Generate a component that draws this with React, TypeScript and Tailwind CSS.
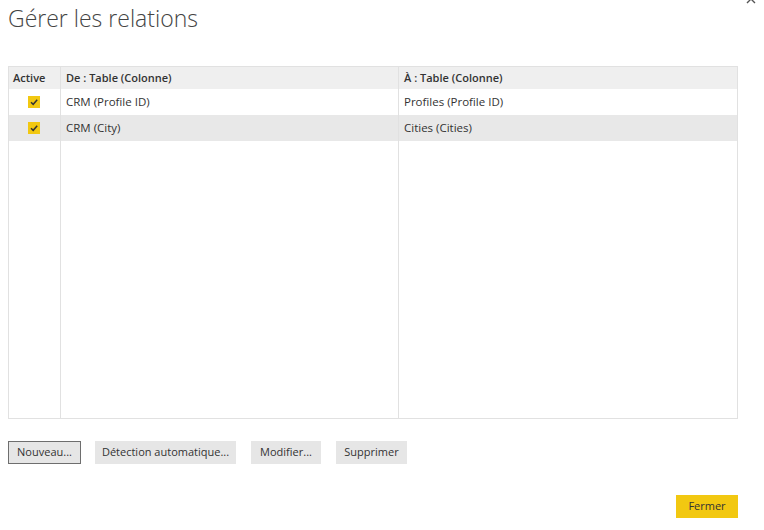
const rows = [
  { from: "CRM (Profile ID)", to: "Profiles (Profile ID)" },
  { from: "CRM (City)", to: "Cities (Cities)" },
];

function Check() {
  return (
    <span className="flex h-[12px] w-[12px] items-center justify-center bg-[#f2c811]">
      <svg width="10" height="10" viewBox="0 0 10 10">
        <path d="M2 5.2 L4.2 7.3 L8.2 2.8" fill="none" stroke="#333" strokeWidth="1.5" />
      </svg>
    </span>
  );
}

export default function App() {
  return (
    <div className="relative h-[530px] w-[764px] overflow-hidden bg-white font-['Open_Sans',sans-serif] text-[#333]">
      <svg className="absolute right-[8px] top-[-6px]" width="10" height="10" viewBox="0 0 10 10">
        <path d="M1 1 L9 9 M9 1 L1 9" stroke="#555" strokeWidth="1.4" />
      </svg>

      <div className="px-[8px] pt-[3px]">
        <h1 className="text-[23px] font-light leading-[31px] text-[#444]">Gérer les relations</h1>

        <div className="mt-[32px] flex h-[353px] w-[730px] flex-col border border-[#e1e1e1]">
          <div className="flex h-[22px] bg-[#efefef] text-[11px] font-semibold leading-[22px] text-[#333]">
            <div className="w-[51px] pl-[4px]">Active</div>
            <div className="w-[338px] border-l border-[#e1e1e1] pl-[5px]">De : Table (Colonne)</div>
            <div className="flex-1 border-l border-[#e1e1e1] pl-[5px]">À : Table (Colonne)</div>
          </div>
          <div className="flex flex-1 flex-col text-[11.5px] text-[#333]">
            {rows.map((r, i) => (
              <div key={i} className={`flex h-[26px] items-center ${i === 1 ? "bg-[#e8e8e8]" : ""}`}>
                <div className="flex w-[51px] justify-center pr-[2px]">
                  <Check />
                </div>
                <div className="flex h-full w-[338px] items-center border-l border-[#e1e1e1] pl-[5px]">{r.from}</div>
                <div className="flex h-full flex-1 items-center border-l border-[#e1e1e1] pl-[5px]">{r.to}</div>
              </div>
            ))}
            <div className="flex flex-1">
              <div className="w-[51px]" />
              <div className="w-[338px] border-l border-[#e1e1e1]" />
              <div className="flex-1 border-l border-[#e1e1e1]" />
            </div>
          </div>
        </div>

        <div className="mt-[22px] flex gap-[15px] text-[11px] text-[#333]">
          <button className="h-[23px] w-[73px] border border-[#6e6e6e] bg-[#e6e6e6]">Nouveau...</button>
          <button className="ml-[-1px] h-[23px] w-[141px] bg-[#e6e6e6]">Détection automatique...</button>
          <button className="h-[23px] w-[70px] bg-[#e6e6e6]">Modifier...</button>
          <button className="h-[23px] w-[71px] bg-[#e6e6e6]">Supprimer</button>
        </div>

        <div className="mt-[31px] flex w-[730px] justify-end">
          <button className="h-[23px] w-[62px] bg-[#f2c811] text-[11px] text-[#333]">Fermer</button>
        </div>
      </div>
    </div>
  );
}
